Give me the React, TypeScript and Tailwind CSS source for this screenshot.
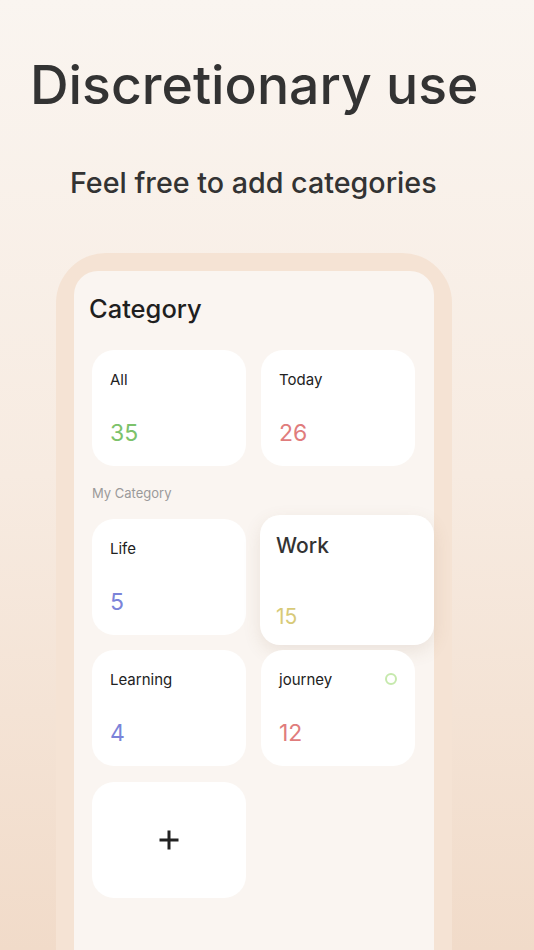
import React from 'react';

interface Cat {
  name: string;
  count: number;
  color: string;
}

const top: Cat[] = [
  { name: 'All', count: 35, color: 'text-[#7cc26b]' },
  { name: 'Today', count: 26, color: 'text-[#e07c7c]' },
];

function Card({ cat, ring }: { cat: Cat; ring?: boolean }) {
  return (
    <div className="relative h-[116px] rounded-[22px] bg-white pl-[18px] pt-[20px]">
      <div className="text-[15px] leading-[20px] text-[#222]">{cat.name}</div>
      <div className={`mt-[29px] text-[23px] leading-[28px] ${cat.color}`}>{cat.count}</div>
      {ring && (
        <div className="absolute right-[18px] top-[23px] h-[12px] w-[12px] rounded-full border-[2.5px] border-[#c6e9ad]" />
      )}
    </div>
  );
}

export default function App() {
  return (
    <div
      className="h-[950px] overflow-hidden bg-gradient-to-b from-[#faf5f0] via-[#f7ebe1] to-[#f1dbc9] text-[#333]"
      style={{ fontFamily: 'Inter, "Liberation Sans", sans-serif' }}
    >
      {/* Header */}
      <h1 className="pl-[30px] pt-[58px] text-[53.5px] font-medium leading-none text-[#333]">
        Discretionary use
      </h1>
      <p className="mt-[57px] pl-[70px] text-[28.7px] font-medium leading-none text-[#333]">
        Feel free to add categories
      </p>

      {/* Phone frame */}
      <div className="ml-[56px] mt-[56px] h-[800px] w-[396px] rounded-t-[50px] bg-[#f5e3d4] px-[18px] pt-[18px]">
        <div className="h-full rounded-t-[24px] bg-[#faf5f1] px-[18px] pt-[25px]">
          <h2 className="-ml-[3px] text-[25.5px] font-medium leading-none text-[#1f1f1f]">Category</h2>

          <div className="mt-[28px] grid grid-cols-[154px_154px] gap-x-[15px]">
            {top.map((c) => (
              <Card key={c.name} cat={c} />
            ))}
          </div>

          <div className="mt-[21px] text-[13px] leading-none text-[#9a9a9a]">My Category</div>

          <div className="mt-[19px] grid grid-cols-[154px_154px] gap-x-[15px] gap-y-[15.5px]">
            <Card cat={{ name: 'Life', count: 5, color: 'text-[#7b83d9]' }} />
            <div className="relative h-[116px]">
              {/* card being dragged */}
              <div className="absolute -left-[1px] -top-[4px] h-[130px] w-[174px] rounded-[20px] bg-white pl-[16px] pt-[18px] shadow-[0_6px_18px_rgba(120,90,60,0.12)]">
                <div className="text-[21px] font-medium leading-[26px] text-[#333]">Work</div>
                <div className="mt-[45px] text-[21px] leading-[26px] text-[#d8ca78]">15</div>
              </div>
            </div>
            <Card cat={{ name: 'Learning', count: 4, color: 'text-[#7b83d9]' }} />
            <Card cat={{ name: 'journey', count: 12, color: 'text-[#e07c7c]' }} ring />
            <div className="flex h-[116px] items-center justify-center rounded-[22px] bg-white">
              <svg width="22" height="22" viewBox="0 0 22 22">
                <path d="M11 1.5v19M1.5 11h19" stroke="#222" strokeWidth="3" />
              </svg>
            </div>
          </div>
        </div>
      </div>
    </div>
  );
}
